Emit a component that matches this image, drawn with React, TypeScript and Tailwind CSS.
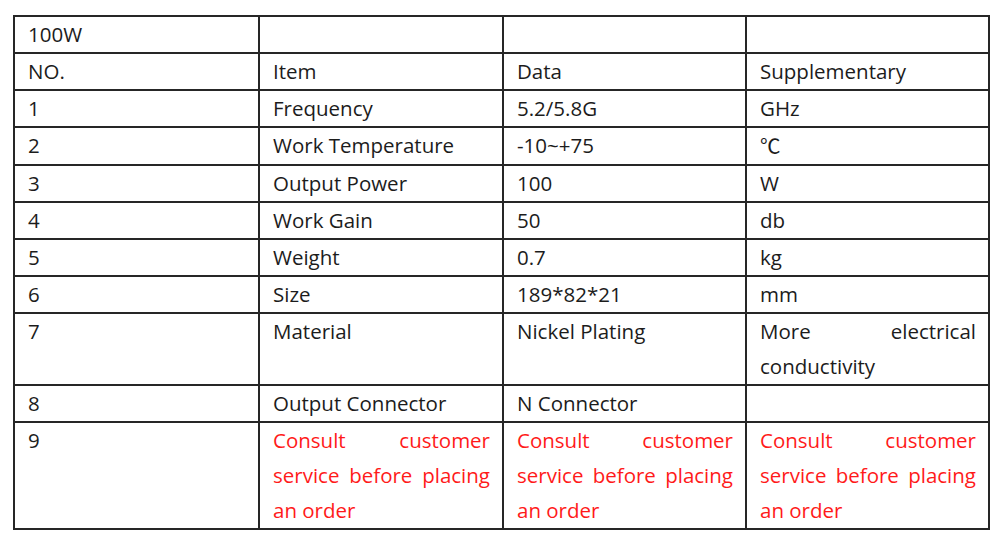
import React from "react";

type Cell = { t: string; red?: boolean; justify?: boolean; cjk?: boolean };

const rows: { h: string; cells: (string | Cell)[] }[] = [
  { h: "h-[37px]", cells: ["100W", "", "", ""] },
  { h: "h-[37px]", cells: ["NO.", "Item", "Data", "Supplementary"] },
  { h: "h-[37px]", cells: ["1", "Frequency", "5.2/5.8G", "GHz"] },
  { h: "h-[37px]", cells: ["2", "Work Temperature", "-10~+75", { t: "℃", cjk: true }] },
  { h: "h-[37px]", cells: ["3", "Output Power", "100", "W"] },
  { h: "h-[37px]", cells: ["4", "Work Gain", "50", "db"] },
  { h: "h-[37px]", cells: ["5", "Weight", "0.7", "kg"] },
  { h: "h-[37px]", cells: ["6", "Size", "189*82*21", "mm"] },
  {
    h: "h-[72px]",
    cells: ["7", "Material", "Nickel Plating", { t: "More electrical conductivity", justify: true }],
  },
  { h: "h-[37px]", cells: ["8", "Output Connector", "N Connector", ""] },
  {
    h: "h-[107px]",
    cells: [
      "9",
      { t: "Consult customer service before placing an order", red: true, justify: true },
      { t: "Consult customer service before placing an order", red: true, justify: true },
      { t: "Consult customer service before placing an order", red: true, justify: true },
    ],
  },
];

export default function App() {
  return (
    <div className="w-[1000px] h-[541px] bg-white pt-[15px] pl-[13px]">
      <table
        className="border-collapse table-fixed w-[975px] text-[20.5px] leading-[35px] text-[#1c1c1c]"
        style={{ fontFamily: '"Open Sans", "Noto Sans CJK SC", sans-serif' }}
      >
        <colgroup>
          <col className="w-[245px]" />
          <col className="w-[244px]" />
          <col className="w-[243px]" />
          <col className="w-[243px]" />
        </colgroup>
        <tbody>
          {rows.map((r, i) => (
            <tr key={i} className={r.h}>
              {r.cells.map((c, j) => {
                const cell: Cell = typeof c === "string" ? { t: c } : c;
                return (
                  <td
                    key={j}
                    className={`border-2 border-[#262626] align-top pl-[13px] pr-[12px] pt-0 pb-0 ${
                      cell.red ? "text-[#ff1a1a]" : ""
                    } ${cell.justify ? "text-justify" : ""}`}
                  >
                    {cell.cjk ? (
                      <span style={{ fontFamily: '"Noto Sans CJK SC", sans-serif' }}>{cell.t}</span>
                    ) : (
                      cell.t
                    )}
                  </td>
                );
              })}
            </tr>
          ))}
        </tbody>
      </table>
    </div>
  );
}
